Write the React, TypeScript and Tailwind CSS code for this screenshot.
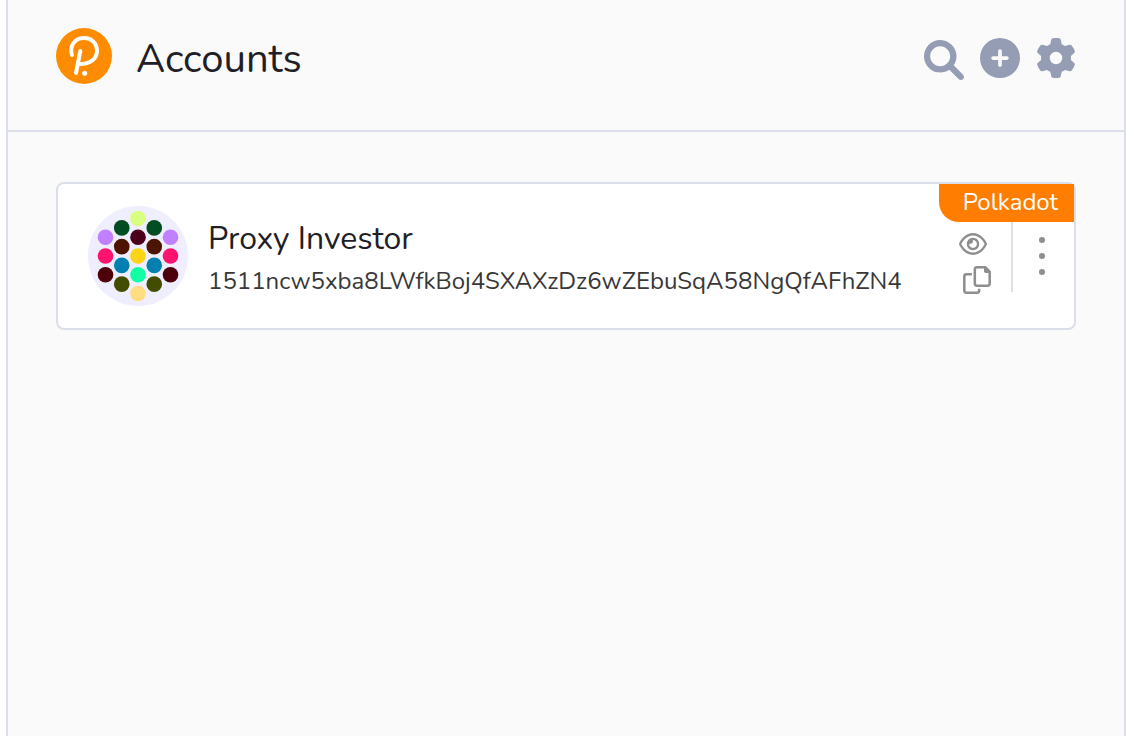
import React from 'react';
import { FaCirclePlus, FaGear } from 'react-icons/fa6';

type Dot = { x: number; y: number; color: string };

const dots: Dot[] = [
  { x: 32, y: 8, color: '#d9ff80' },
  { x: 32, y: 20, color: '#4d0019' },
  { x: 21.6, y: 14, color: '#004d22' },
  { x: 11.2, y: 20, color: '#c080ff' },
  { x: 21.6, y: 26, color: '#4d1500' },
  { x: 11.2, y: 32, color: '#ff136f' },
  { x: 11.2, y: 44, color: '#4d0009' },
  { x: 21.6, y: 38, color: '#0280b2' },
  { x: 21.6, y: 50, color: '#424d00' },
  { x: 32, y: 56, color: '#ffdd80' },
  { x: 32, y: 44, color: '#13ffa4' },
  { x: 42.4, y: 50, color: '#424d00' },
  { x: 52.8, y: 44, color: '#4d0009' },
  { x: 42.4, y: 38, color: '#0280b2' },
  { x: 52.8, y: 32, color: '#ff136f' },
  { x: 52.8, y: 20, color: '#c080ff' },
  { x: 42.4, y: 26, color: '#4d1500' },
  { x: 42.4, y: 14, color: '#004d22' },
  { x: 32, y: 32, color: '#fcd516' },
];

function Logo() {
  return (
    <svg viewBox="0 0 168 168" className="size-14 shrink-0" aria-hidden="true">
      <circle cx="84" cy="84" r="84" fill="#ff8c00" />
      <g fill="none" stroke="#fff" strokeWidth="12" strokeLinecap="round" strokeLinejoin="round">
        <path d="M48 81C40 54 55 30 84 30C107 30 123 46 123 69C123 92 103 109 68 108" />
        <path d="M73 69L60 135" />
      </g>
      <circle cx="86" cy="136" r="7.5" fill="#fff" />
    </svg>
  );
}

function Identicon() {
  return (
    <svg viewBox="0 0 64 64" className="size-[100px] shrink-0" aria-hidden="true">
      <circle cx="32" cy="32" r="32" fill="#eeeeff" />
      {dots.map((d) => (
        <circle key={`${d.x}-${d.y}`} cx={d.x} cy={d.y} r="5" fill={d.color} />
      ))}
    </svg>
  );
}

function SearchIcon() {
  return (
    <svg viewBox="0 0 512 512" className="size-10" fill="currentColor" aria-hidden="true">
      <path d="M500.3 443.7l-119.7-119.7c27.22-40.41 40.65-90.9 33.46-144.7C401.8 87.79 326.8 13.32 235.2 1.723C99.01-15.51-15.51 99.01 1.724 235.2c11.6 91.64 86.08 166.7 177.6 178.9c53.8 7.189 104.3-6.236 144.7-33.46l119.7 119.7c15.62 15.62 40.95 15.62 56.57 0C515.9 484.7 515.9 459.3 500.3 443.7zM79.1 208c0-70.58 57.42-128 128-128s128 57.42 128 128c0 70.58-57.42 128-128 128S79.1 278.6 79.1 208z" />
    </svg>
  );
}

function EyeIcon() {
  return (
    <svg viewBox="0 -32 576 576" className="size-7" fill="currentColor" aria-hidden="true">
      <path d="M160 256C160 185.3 217.3 128 288 128C358.7 128 416 185.3 416 256C416 326.7 358.7 384 288 384C217.3 384 160 326.7 160 256zM288 336C332.2 336 368 300.2 368 256C368 211.8 332.2 176 288 176C287.3 176 286.7 176 285.1 176C287.3 181.1 288 186.5 288 192C288 227.3 259.3 256 224 256C218.5 256 213.1 255.3 208 253.1C208 254.7 208 255.3 208 256C208 300.2 243.8 336 288 336zM95.42 112.6C142.5 68.84 207.2 32 288 32C368.8 32 433.5 68.84 480.6 112.6C527.4 156 558.7 207.1 573.5 243.7C576.8 251.6 576.8 260.4 573.5 268.3C558.7 304 527.4 355.1 480.6 399.4C433.5 443.2 368.8 480 288 480C207.2 480 142.5 443.2 95.42 399.4C48.62 355.1 17.34 304 2.461 268.3C-.8205 260.4-.8205 251.6 2.461 243.7C17.34 207.1 48.62 156 95.42 112.6zM288 80C222.8 80 169.2 109.6 128.1 147.7C89.6 183.5 63.02 225.1 49.44 256C63.02 286 89.6 328.5 128.1 364.3C169.2 402.4 222.8 432 288 432C353.2 432 406.8 402.4 447.9 364.3C486.4 328.5 512.1 286 526.6 256C512.1 225.1 486.4 183.5 447.9 147.7C406.8 109.6 353.2 80 288 80z" />
    </svg>
  );
}

function CopyIcon() {
  return (
    <svg viewBox="0 0 512 512" className="size-7" fill="none" stroke="currentColor" strokeWidth="46" aria-hidden="true">
      <path d="M256 24H408L488 104V320A40 40 0 0 1 448 360H256A40 40 0 0 1 216 320V64A40 40 0 0 1 256 24Z" />
      <path d="M384 10V96A32 32 0 0 0 416 128H502V96L416 10Z" fill="currentColor" stroke="none" />
      <path d="M162 152H64A40 40 0 0 0 24 192V448A40 40 0 0 0 64 488H256A40 40 0 0 0 296 448V414" />
    </svg>
  );
}

export default function App() {
  return (
    <div className="min-h-screen bg-white pr-2 pl-1.5 font-['Nunito','Noto_Sans',sans-serif] text-[#1f2025]">
      <main className="min-h-screen border-x-2 border-[#dadfea] bg-[#fafafa]">
        <header className="flex items-start border-b-2 border-[#dadfea] px-12 pt-7 pb-10">
          <Logo />
          <h1 className="ml-6 text-[40px] leading-[62px]">Accounts</h1>
          <div className="ml-auto flex items-start gap-4 pt-2.5 text-[#959db5]">
            <button type="button" aria-label="Search" className="pt-0.5">
              <SearchIcon />
            </button>
            <button type="button" aria-label="Add account">
              <FaCirclePlus size={40} />
            </button>
            <button type="button" aria-label="Settings">
              <FaGear size={40} />
            </button>
          </div>
        </header>
        <section className="px-12 pt-[50px]">
          <article className="relative flex items-start rounded-lg border-2 border-[#dadfea] bg-white pl-[30px]">
            <div className="flex min-w-0 flex-1 items-center gap-5 py-[22px]">
              <Identicon />
              <div className="min-w-0 pt-1.5">
                <h2 className="text-[32px] leading-[44px]">Proxy Investor</h2>
                <p className="text-2xl leading-10 text-[#383838]">
                  1511ncw5xba8LWfkBoj4SXAXzDz6wZEbuSqA58NgQfAFhZN4
                </p>
              </div>
            </div>
            <div className="mt-[38px] flex h-[70px]">
              <div className="flex w-[52px] flex-col gap-2 pt-2 text-[#8e8e8e]">
                <button type="button" aria-label="Hide account" className="flex h-7 items-center">
                  <EyeIcon />
                </button>
                <button type="button" aria-label="Copy address" className="ml-1 flex h-7 items-center">
                  <CopyIcon />
                </button>
              </div>
              <button
                type="button"
                aria-label="Account menu"
                className="flex w-[63px] flex-col items-center gap-2.5 border-l-2 border-[#dadfea] pt-[15px] pr-1"
              >
                <span className="size-1.5 rounded-full bg-[#8e8e8e]" />
                <span className="size-1.5 rounded-full bg-[#8e8e8e]" />
                <span className="size-1.5 rounded-full bg-[#8e8e8e]" />
              </button>
            </div>
            <span className="absolute top-0 right-0 rounded-bl-[20px] bg-[#ff7d01] pr-4 pb-0.5 pl-6 text-2xl leading-9 text-white">
              Polkadot
            </span>
          </article>
        </section>
      </main>
    </div>
  );
}
